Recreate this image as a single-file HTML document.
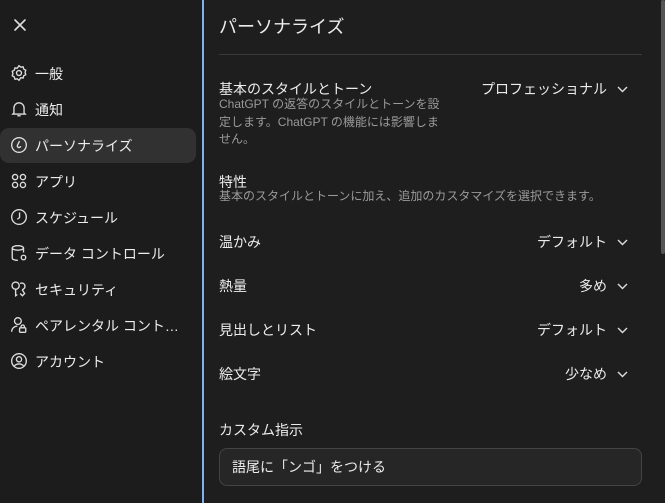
<!DOCTYPE html>
<html><head><meta charset="utf-8">
<style>
*{margin:0;padding:0;box-sizing:border-box}
body{width:665px;height:503px;background:#1e1e1e;color:#ececec;font-family:"Liberation Sans","Noto Sans CJK JP",sans-serif;position:relative;overflow:hidden}
.side{position:absolute;left:0;top:0;width:202px;height:503px;background:#1c1c1c}
.bar{position:absolute;left:202px;top:0;width:2px;height:503px;background:#7fb0f0}
.close{position:absolute;left:13px;top:18px}
.item{position:absolute;left:0;width:196px;height:35px;display:flex;align-items:center;font-size:14px;color:#ececec}
.item svg{position:absolute;left:10px;top:8px}
.item span{position:absolute;left:35px}
.sel{background:#313131;border-radius:9px}
.main{position:absolute;left:219px;top:0;width:423px}
.t{position:absolute;font-size:14px;color:#ececec;white-space:nowrap}
.d{position:absolute;font-size:12px;color:#9a9a9a;line-height:17.5px}
.v{position:absolute;right:0;font-size:14px;color:#ececec;display:flex;align-items:center;white-space:nowrap}
.v svg{margin-left:10px;margin-right:14px}
.scroll{position:absolute;left:661px;top:0;width:4px;height:254px;background:#555;border-radius:2px}
</style></head><body>
<div class="side">
<svg class="close" width="14" height="14" viewBox="0 0 14 14"><path d="M2 2L12 12M12 2L2 12" stroke="#ddd" stroke-width="1.6" stroke-linecap="round"/></svg>
<div class="item" style="top:56px"><svg width="18" height="18" viewBox="0 0 16 16" fill="none" stroke="#ddd" stroke-width="1.2"><path d="M8 1.5l1.6 1.3 2-.3.6 2 1.8 1-.6 2 .6 2-1.8 1-.6 2-2-.3L8 14.5l-1.6-1.3-2 .3-.6-2-1.8-1 .6-2-.6-2 1.8-1 .6-2 2 .3z"/><circle cx="8" cy="8" r="2.2"/></svg><span>一般</span></div>
<div class="item" style="top:92px"><svg width="18" height="18" viewBox="0 0 16 16" fill="none" stroke="#ddd" stroke-width="1.2"><path d="M3.5 11.5V7a4.5 4.5 0 019 0v4.5l1 1H2.5z"/><path d="M6.5 14h3"/></svg><span>通知</span></div>
<div class="item sel" style="top:128px"><svg width="18" height="18" viewBox="0 0 16 16" fill="none" stroke="#ddd" stroke-width="1.2"><circle cx="8" cy="8" r="6.5"/><path d="M8.5 4.5L6.5 8.5a1.5 1.5 0 103 .5"/></svg><span>パーソナライズ</span></div>
<div class="item" style="top:164px"><svg width="18" height="18" viewBox="0 0 16 16" fill="none" stroke="#ddd" stroke-width="1.2"><circle cx="4.5" cy="4.5" r="2.3"/><circle cx="11.5" cy="4.5" r="2.3"/><circle cx="4.5" cy="11.5" r="2.3"/><circle cx="11.5" cy="11.5" r="2.3"/></svg><span>アプリ</span></div>
<div class="item" style="top:200px"><svg width="18" height="18" viewBox="0 0 16 16" fill="none" stroke="#ddd" stroke-width="1.2"><circle cx="8" cy="8" r="6.5"/><path d="M8.5 4v4.5L6.5 10"/></svg><span>スケジュール</span></div>
<div class="item" style="top:236px"><svg width="18" height="18" viewBox="0 0 16 16" fill="none" stroke="#ddd" stroke-width="1.2"><ellipse cx="7" cy="3.5" rx="5" ry="2"/><path d="M2 3.5v9c0 1 2 2 5 2M12 3.5v4"/><circle cx="12" cy="12" r="2"/></svg><span>データ コントロール</span></div>
<div class="item" style="top:272px"><svg width="18" height="18" viewBox="0 0 16 16" fill="none" stroke="#ddd" stroke-width="1.2"><circle cx="5" cy="5" r="3.2"/><path d="M5 8v6l1.5-1M9 3c3-1 5 1 4 4l-2 2 2 3-2 2-2-2"/></svg><span>セキュリティ</span></div>
<div class="item" style="top:308px"><svg width="18" height="18" viewBox="0 0 16 16" fill="none" stroke="#ddd" stroke-width="1.2"><circle cx="7" cy="4.5" r="3"/><path d="M1.5 14c0-3 2.5-5 5-5"/><rect x="8.5" y="10.5" width="5.5" height="4" rx=".8"/><path d="M9.8 10.5V9.5a1.5 1.5 0 013 0v1"/></svg><span>ペアレンタル コント…</span></div>
<div class="item" style="top:344px"><svg width="18" height="18" viewBox="0 0 16 16" fill="none" stroke="#ddd" stroke-width="1.2"><circle cx="8" cy="8" r="6.5"/><circle cx="8" cy="6.5" r="2.3"/><path d="M3.8 12.5c2-2.5 6.4-2.5 8.4 0"/></svg><span>アカウント</span></div>
</div>
<div class="bar"></div>
<div class="main">
<div class="t" style="top:13px;font-size:18px">パーソナライズ</div>
<div style="position:absolute;top:54px;left:0;width:423px;height:1px;background:#3a3a3a"></div>
<div class="t" style="top:79px">基本のスタイルとトーン</div>
<div class="v" style="top:79px">プロフェッショナル<svg width="11" height="7" viewBox="0 0 11 7"><path d="M1 1l4.5 4.5L10 1" fill="none" stroke="#ddd" stroke-width="1.4"/></svg></div>
<div class="d" style="top:96px;width:230px">ChatGPT の返答のスタイルとトーンを設定します。ChatGPT の機能には影響しません。</div>
<div class="t" style="top:172px">特性</div>
<div class="d" style="top:188px;white-space:nowrap">基本のスタイルとトーンに加え、追加のカスタマイズを選択できます。</div>
<div class="t" style="top:232px">温かみ</div>
<div class="v" style="top:232px">デフォルト<svg width="11" height="7" viewBox="0 0 11 7"><path d="M1 1l4.5 4.5L10 1" fill="none" stroke="#ddd" stroke-width="1.4"/></svg></div>
<div class="t" style="top:276px">熱量</div>
<div class="v" style="top:276px">多め<svg width="11" height="7" viewBox="0 0 11 7"><path d="M1 1l4.5 4.5L10 1" fill="none" stroke="#ddd" stroke-width="1.4"/></svg></div>
<div class="t" style="top:320px">見出しとリスト</div>
<div class="v" style="top:320px">デフォルト<svg width="11" height="7" viewBox="0 0 11 7"><path d="M1 1l4.5 4.5L10 1" fill="none" stroke="#ddd" stroke-width="1.4"/></svg></div>
<div class="t" style="top:364px">絵文字</div>
<div class="v" style="top:364px">少なめ<svg width="11" height="7" viewBox="0 0 11 7"><path d="M1 1l4.5 4.5L10 1" fill="none" stroke="#ddd" stroke-width="1.4"/></svg></div>
<div class="t" style="top:420px">カスタム指示</div>
<div style="position:absolute;top:448px;left:0;width:423px;height:38px;border:1px solid #444;border-radius:8px;background:#262626"></div>
<div class="t" style="top:457px;left:13px">語尾に「ンゴ」をつける</div>
</div>
<div class="scroll"></div>
</body></html>
